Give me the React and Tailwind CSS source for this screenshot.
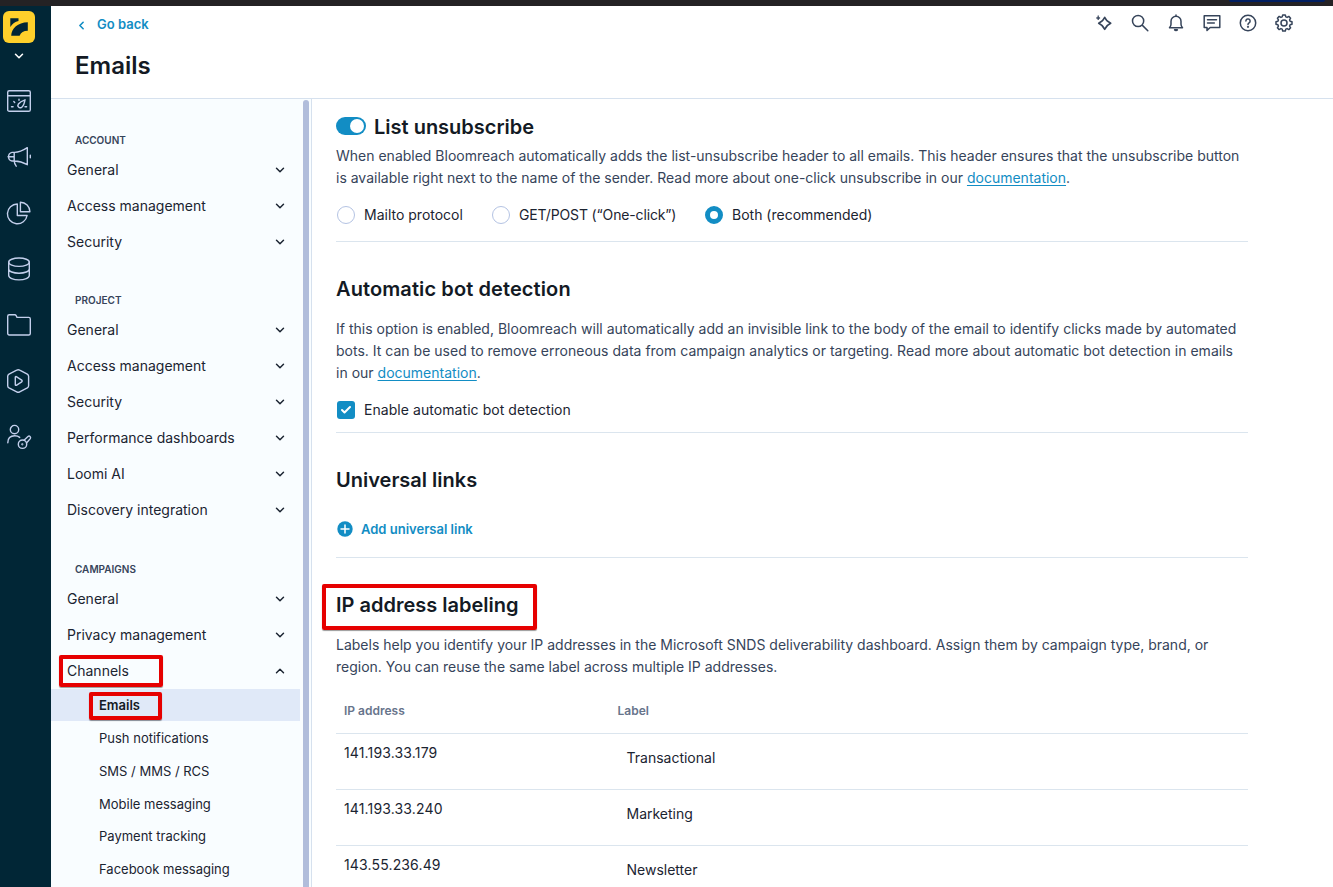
import { Check, ChevronDown, ChevronLeft, ChevronUp } from 'lucide-react';

const accountItems = ['General', 'Access management', 'Security'];
const projectItems = [
  'General',
  'Access management',
  'Security',
  'Performance dashboards',
  'Loomi AI',
  'Discovery integration',
];
const channels = [
  'Push notifications',
  'SMS / MMS / RCS',
  'Mobile messaging',
  'Payment tracking',
  'Facebook messaging',
];
const ipRows = [
  { ip: '141.193.33.179', label: 'Transactional' },
  { ip: '141.193.33.240', label: 'Marketing' },
  { ip: '143.55.236.49', label: 'Newsletter' },
];

const railIcons = [
  {
    name: 'dashboard',
    art: (
      <>
        <rect x="0.7" y="1.7" width="22.6" height="20.6" rx="1.6" />
        <path d="M.7 6.7h22.6M4.5 17.7h1.600M18 17.700h1.600M6.800 12.500l.9.900M12 10.200v1M18 10.800c-2.800.9-5.400 2.500-6.600 4.200-1.500 2.200.8 4.800 3.200 3.300 1.900-1.300 2.900-4.700 3.400-7.500z" />
      </>
    ),
  },
  {
    name: 'campaigns',
    art: (
      <path d="M20.300 2.700v17C16 17.200 12.200 16 7.500 16H5a4.400 4.400 0 0 1 0-8.600h2.500c4.700 0 8.500-1.800 12.800-4.700zM7.200 7.400V16c.1 1.800.8 3.600 2 5.200M1 11.700h6M23.300 10.200v2.600" />
    ),
  },
  {
    name: 'analytics',
    art: (
      <path d="M10.300 3A9.900 9.900 0 1 0 20.100 14.500h-9.800zM13.400 1.200v9.600h9.500a9.600 9.600 0 0 0-9.500-9.600z" />
    ),
  },
  {
    name: 'data',
    art: (
      <>
        <ellipse cx="12" cy="5.200" rx="10.300" ry="4.200" />
        <path d="M1.700 5.200v13.400c0 2.400 4.600 4.300 10.300 4.300s10.300-1.900 10.300-4.300V5.200M1.700 12c0 2.400 4.600 4.200 10.300 4.200S22.300 14.400 22.300 12" />
      </>
    ),
  },
  {
    name: 'assets',
    art: (
      <path d="M.7 3.200A1.500 1.500 0 0 1 2.200 1.700h5.600c.7 0 1 .3 1.400 1l.8 1.700h11.800a1.500 1.500 0 0 1 1.500 1.500v14.600a1.500 1.500 0 0 1-1.500 1.500H2.200a1.500 1.500 0 0 1-1.500-1.500z" />
    ),
  },
  {
    name: 'playbooks',
    art: (
      <path d="M9.700 1.200a3 3 0 0 1 3 0l7.600 3.900c.8.500 1.300 1.300 1.300 2.200v9.400c0 .9-.5 1.700-1.300 2.200l-7.600 3.900a3 3 0 0 1-3 0l-7.700-3.900A2.500 2.500 0 0 1 .7 16.700V7.300c0-.9.5-1.700 1.300-2.200zM8.300 8.300v7.400c0 .6.500.8 1 .6l5.400-3.500c.6-.4.6-1.200 0-1.600L9.300 7.700c-.5-.3-1 0-1 .6z" />
    ),
  },
  {
    name: 'access',
    art: (
      <>
        <circle cx="7.500" cy="4.600" r="4.200" />
        <path d="M.8 17.700c0-4.500 2.800-6.900 7-6.900 2 0 3.600.5 4.900 1.600M17 15.200l4-3.700c1.400-1.200 3.300.5 2.300 2.100l-3.800 4.400" />
        <circle cx="15.500" cy="19.200" r="4.200" />
        <circle cx="15.300" cy="19.300" r=".4" />
      </>
    ),
  },
];

const toolbarIcons = [
  {
    name: 'loomi',
    art: (
      <>
        <path d="M9.700 3.200C10.900 6 13 8.100 15.800 9.300 13 10.500 10.900 12.600 9.700 15.400 8.500 12.600 6.400 10.500 3.600 9.300 6.400 8.100 8.500 6 9.700 3.200z" />
        <path
          d="M3.200 2c.3 1.200.8 1.700 1.900 2-1.100.3-1.600.8-1.900 2-.3-1.200-.8-1.700-1.900-2 1.100-.3 1.600-.8 1.900-2z"
          fill="currentColor"
          strokeWidth=".7"
        />
      </>
    ),
  },
  {
    name: 'search',
    art: <path d="M12.700 7a5.600 5.600 0 1 1-11.200 0 5.600 5.600 0 0 1 11.200 0zM11.200 11.100l5.600 5.600" />,
  },
  {
    name: 'notifications',
    art: (
      <>
        <path d="M9 1v1M2.500 13.700h13c-.9-1-1.500-1.800-1.500-3.500V7.300a5 5 0 0 0-10 0v2.900c0 1.700-.6 2.500-1.500 3.500z" />
        <path d="M7.600 15.800c.5.800 2.300.8 2.800 0z" fill="currentColor" />
      </>
    ),
  },
  { name: 'feedback', art: <path d="M1.200 1.700h15.600v11.800H7.200L4 16.400v-2.900H1.200zM4.500 5.800h9M4.500 9h6.800" /> },
  {
    name: 'help',
    art: (
      <>
        <circle cx="9" cy="9" r="7.700" />
        <path d="M6.900 7a2.100 2.100 0 1 1 3.200 1.800c-.8.500-1.100.8-1.100 1.600" />
        <circle cx="9" cy="12.800" r=".4" fill="currentColor" />
      </>
    ),
  },
  {
    name: 'settings',
    art: (
      <>
        <path d="M7.200 2.900 7.700 1h2.600l.5 1.900 1.300.5 1.700-1 1.800 1.800-1 1.700.5 1.300 1.900.5v2.600l-1.900.5-.5 1.300 1 1.700-1.800 1.800-1.700-1-1.300.5-.5 1.900H7.700l-.5-1.900-1.300-.5-1.700 1-1.800-1.800 1-1.700-.5-1.300L1 10.300V7.700l1.900-.5.5-1.300-1-1.700 1.800-1.800 1.700 1z" />
        <circle cx="9" cy="9" r="3" />
      </>
    ),
  },
];

function Rail() {
  return (
    <nav className="flex w-[51px] shrink-0 flex-col bg-[#012636] text-[#c3cfec]">
      <div className="mt-[5px] ml-[3px] h-8 w-8 rounded-md bg-[#ffd02b]">
        <svg viewBox="0 0 32 32" className="h-8 w-8" fill="#012636">
          <path d="M7.300 7.200h8.200v2.700c-3.500.8-6 2.700-8.200 6z" />
          <path d="M24.800 11.200v8.600c-4.200.1-6.900 1.500-8.200 5H8.200c.4-7.800 6.500-13.300 16.600-13.600z" />
        </svg>
      </div>
      <ChevronDown className="mt-1.5 ml-3 h-3.5 w-3.5 text-white" strokeWidth={2.6} />
      <div className="mt-[26px] ml-[7px] flex flex-col gap-8">
        {railIcons.map(({ name, art }) => (
          <svg
            key={name}
            viewBox="0 0 24 24"
            className="h-6 w-6 overflow-visible"
            fill="none"
            stroke="currentColor"
            strokeWidth="1.400"
            strokeLinecap="round"
            strokeLinejoin="round"
          >
            {art}
          </svg>
        ))}
      </div>
    </nav>
  );
}

function Header() {
  return (
    <header className="flex h-[93px] shrink-0 justify-between border-b border-[#d6e1ee]">
      <div className="pl-6">
        <div className="mt-[9px] flex h-5 items-center text-[13px] font-semibold text-[#128dc4]">
          <ChevronLeft className="mr-[9px] h-[13px] w-[13px]" strokeWidth={3} />
          Go back
        </div>
        <h1 className="mt-[15px] text-2xl leading-8 font-semibold text-[#131a24]">Emails</h1>
      </div>
      <div className="mt-2 mr-10 flex h-[18px] gap-[18px] text-[#36445a]">
        {toolbarIcons.map(({ name, art }) => (
          <svg
            key={name}
            viewBox="0 0 18 18"
            className="h-[18px] w-[18px] overflow-visible"
            fill="none"
            stroke="currentColor"
            strokeWidth="1.500"
            strokeLinecap="round"
            strokeLinejoin="round"
          >
            {art}
          </svg>
        ))}
      </div>
    </header>
  );
}

function GroupTitle({ children }) {
  return (
    <div className="flex h-[52.600px] items-end pb-1 pl-6 text-[10px] leading-4 font-semibold text-[#36445a]">
      {children}
    </div>
  );
}

function MenuItem({ label, open, marked }) {
  const Icon = open ? ChevronUp : ChevronDown;
  return (
    <div className="relative flex h-9 items-center justify-between pr-[13px] pl-4 text-sm text-[#1b2431]">
      {label}
      <Icon className="h-3.5 w-3.5" strokeWidth={2.5} />
      {marked && (
        <span className="absolute top-[2px] left-2 h-8 w-[104px] rounded-xs border-4 border-[#e60000] shadow-[0_1px_1px_#0006]" />
      )}
    </div>
  );
}

function Sidebar() {
  return (
    <aside className="flex w-[261px] shrink-0 justify-between overflow-hidden border-r border-[#d6e1ee] bg-[#f9fdff]">
      <div className="w-[249px]">
        <GroupTitle>ACCOUNT</GroupTitle>
        {accountItems.map((item) => (
          <MenuItem key={item} label={item} />
        ))}
        <GroupTitle>PROJECT</GroupTitle>
        {projectItems.map((item) => (
          <MenuItem key={item} label={item} />
        ))}
        <GroupTitle>CAMPAIGNS</GroupTitle>
        <MenuItem label="General" />
        <MenuItem label="Privacy management" />
        <MenuItem label="Channels" open marked />
        <div className="relative mb-[1.500px] flex h-8 items-center bg-[#e0e9f8] pt-0.5 pl-12 text-[13px] font-semibold text-[#131a24]">
          Emails
          <span className="absolute top-[3px] left-[38px] h-[28px] w-[73px] rounded-xs border-4 border-[#e60000] shadow-[0_1px_1px_#0006]" />
        </div>
        {channels.map((item) => (
          <div key={item} className="flex h-[32.800px] items-center pl-12 text-[13px] text-[#1b2431]">
            {item}
          </div>
        ))}
      </div>
      <div className="mt-px mr-[2px] w-1.5 rounded-t-full bg-[#b1bddb]" />
    </aside>
  );
}

function SectionTitle({ children }) {
  return <h2 className="text-xl leading-7 font-semibold text-[#131a24]">{children}</h2>;
}

function DocLink() {
  return (
    <a className="text-[#128dc4] underline underline-offset-2">documentation</a>
  );
}

function Radio({ label, checked }) {
  return (
    <label className="flex items-center gap-[9px] whitespace-nowrap">
      <span
        className={`h-[18px] w-[18px] rounded-full bg-white ${
          checked ? 'border-[5px] border-[#128dc4]' : 'border border-[#b4c3e3]'
        }`}
      />
      {label}
    </label>
  );
}

function Content() {
  return (
    <main className="min-w-0 flex-1 overflow-hidden pr-[85px] pl-6 text-sm leading-[22px] whitespace-nowrap text-[#36445a]">
      <section className="h-[143px] border-b border-[#dbe5ee] pt-[14px]">
        <div className="flex items-center gap-2">
          <span className="-mt-0.5 flex h-[18px] w-[30px] justify-end rounded-full bg-[#128dc4] p-[2px]">
            <span className="h-3.5 w-3.5 rounded-full bg-white" />
          </span>
          <SectionTitle>List unsubscribe</SectionTitle>
        </div>
        <p className="mt-1">
          When enabled Bloomreach automatically adds the list-unsubscribe header to all emails. This header ensures that the unsubscribe button
          <br />
          is available right next to the name of the sender. Read more about one-click unsubscribe in our <DocLink />.
        </p>
        <div className="mt-[15px] ml-px flex text-[#1b2431]">
          <div className="w-[155px]">
            <Radio label="Mailto protocol" />
          </div>
          <div className="w-[213px] tracking-[-0.140px]">
            <Radio label="GET/POST (“One-click”)" />
          </div>
          <Radio label="Both (recommended)" checked />
        </div>
      </section>

      <section className="h-[191px] border-b border-[#dbe5ee] pt-[33px] tracking-[0.010px]">
        <div className="tracking-[0.100px]">
          <SectionTitle>Automatic bot detection</SectionTitle>
        </div>
        <p className="mt-[15px]">
          If this option is enabled, Bloomreach will automatically add an invisible link to the body of the email to identify clicks made by automated
          <br />
          bots. It can be used to remove erroneous data from campaign analytics or targeting. Read more about automatic bot detection in emails
          <br />
          in our <DocLink />.
        </p>
        <label className="mt-[15px] ml-px flex items-center gap-[9px] tracking-[0.060px] text-[#1b2431]">
          <span className="flex h-[18px] w-[18px] items-center justify-center rounded-[3px] bg-[#128dc4]">
            <Check className="h-3 w-3 text-white" strokeWidth={4} />
          </span>
          Enable automatic bot detection
        </label>
      </section>

      <section className="h-[125px] border-b border-[#dbe5ee] pt-[33px]">
        <SectionTitle>Universal links</SectionTitle>
        <div className="mt-6 ml-px flex items-center gap-2 text-[13px] font-semibold text-[#128dc4]">
          <svg viewBox="0 0 16 16" className="h-4 w-4">
            <circle cx="8" cy="8" r="7.700" fill="currentColor" />
            <path d="M8 4v8M4 8h8" stroke="white" strokeWidth="1.500" strokeLinecap="round" />
          </svg>
          Add universal link
        </div>
      </section>

      <section className="pt-[33px]">
        <div className="relative">
          <SectionTitle>IP address labeling</SectionTitle>
          <span className="absolute -top-[7px] -left-[14px] h-[46px] w-[215px] rounded-xs border-4 border-[#e60000] shadow-[0_1px_1px_#0006]" />
        </div>
        <p className="mt-[15px]">
          Labels help you identify your IP addresses in the Microsoft SNDS deliverability dashboard. Assign them by campaign type, brand, or
          <br />
          region. You can reuse the same label across multiple IP addresses.
        </p>
        <div className="mt-[11px] grid h-[45px] grid-cols-[273.500px_1fr] items-center border-b border-[#dbe5ee] pl-2 text-xs font-semibold text-[#67748b]">
          <span>IP address</span>
          <span>Label</span>
        </div>
        {ipRows.map(({ ip, label }) => (
          <div
            key={ip}
            className="grid h-14 grid-cols-[282.500px_1fr] border-b border-[#dbe5ee] pl-2 text-[#1b2431]"
          >
            <span className="pt-2 tracking-[0.150px]">{ip}</span>
            <span className="pt-[13px]">{label}</span>
          </div>
        ))}
      </section>
    </main>
  );
}

export default function App() {
  return (
    <div className="flex h-[887px] w-[1333px] flex-col overflow-hidden bg-white font-['Inter',sans-serif]">
      <div className="flex h-1.5 shrink-0 items-start justify-end bg-[#242224]">
        <div className="mr-2 h-0.5 w-24 rounded-b-sm bg-[#001e60]" />
      </div>
      <div className="flex min-h-0 flex-1">
        <Rail />
        <div className="flex min-w-0 flex-1 flex-col">
          <Header />
          <div className="flex min-h-0 flex-1">
            <Sidebar />
            <Content />
          </div>
        </div>
      </div>
    </div>
  );
}
